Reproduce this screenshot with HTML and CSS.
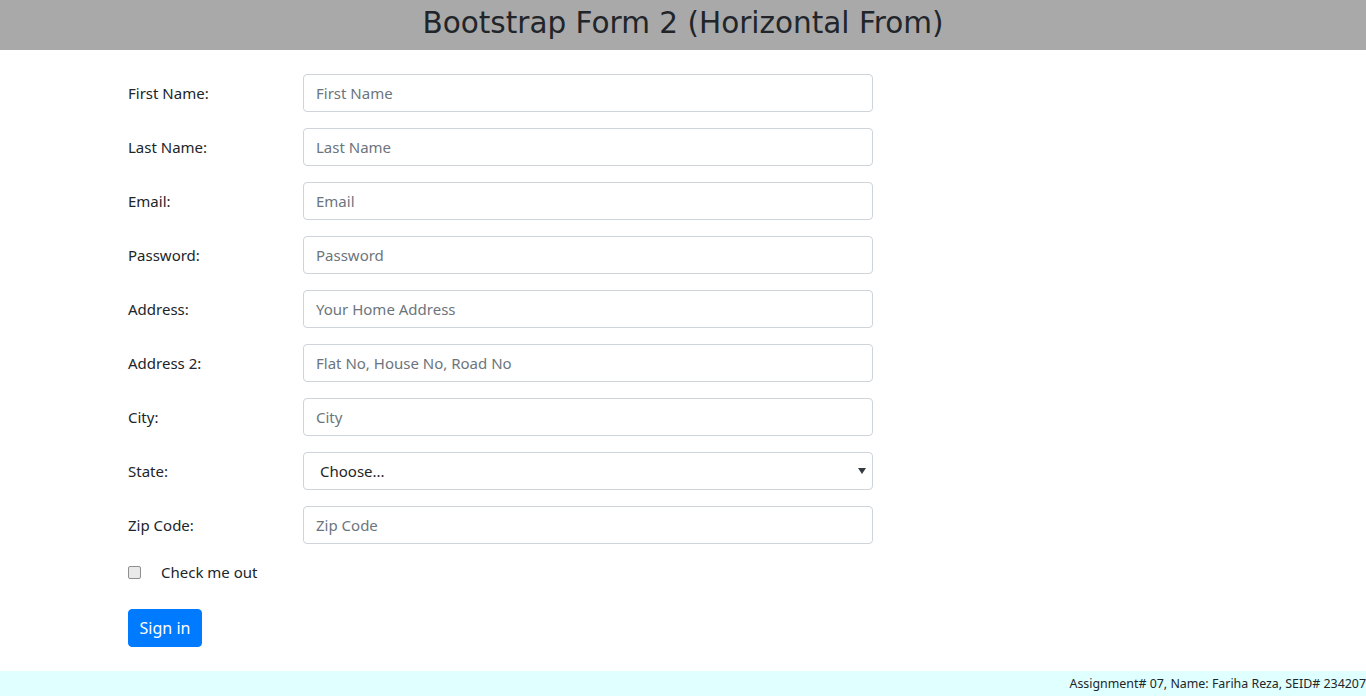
FILE: index.html
```html
<!DOCTYPE html>
<html>
<head>
<meta charset="utf-8">
<link rel="stylesheet" href="styles.css">
</head>
<body>
<header class="top"><h1 class="title">Bootstrap Form 2 (Horizontal From)</h1></header>
<main class="container">
  <form class="form">
    <div class="row"><label class="lbl">First Name:</label><input class="field" placeholder="First Name"></div>
    <div class="row"><label class="lbl">Last Name:</label><input class="field" placeholder="Last Name"></div>
    <div class="row"><label class="lbl">Email:</label><input class="field" placeholder="Email"></div>
    <div class="row"><label class="lbl">Password:</label><input class="field" type="password" placeholder="Password"></div>
    <div class="row"><label class="lbl">Address:</label><input class="field" placeholder="Your Home Address"></div>
    <div class="row"><label class="lbl">Address 2:</label><input class="field" placeholder="Flat No, House No, Road No"></div>
    <div class="row"><label class="lbl">City:</label><input class="field" placeholder="City"></div>
    <div class="row"><label class="lbl">State:</label>
      <div class="selwrap">
        <select class="field sel"><option>Choose...</option></select>
        <svg class="arrow" width="8" height="6" viewBox="0 0 8 6"><path d="M0 0H8L4 6Z" fill="#343a40"/></svg>
      </div>
    </div>
    <div class="row"><label class="lbl">Zip Code:</label><input class="field" placeholder="Zip Code"></div>
    <div class="check"><input type="checkbox" class="cb"><span class="cbl">Check me out</span></div>
    <button type="button" class="btn">Sign in</button>
  </form>
</main>
<footer class="foot">Assignment# 07, Name: Fariha Reza, SEID# 234207</footer>
</body>
</html>
```
FILE: styles.css
```css
* { box-sizing: border-box; }
html, body { margin: 0; padding: 0; }
body {
  font-family: "Noto Sans", "Open Sans", sans-serif;
  font-size: 15px;
  color: #212529;
  background: #fff;
}
.top {
  background: #a9a9a9;
  height: 50px;
  display: flex;
  align-items: center;
  justify-content: center;
  padding-bottom: 2px;
}
.title {
  margin: 0;
  font-family: "DejaVu Sans", Verdana, sans-serif;
  font-weight: normal;
  font-size: 29.5px;
  color: #212529;
  line-height: 1;
}
.container {
  padding: 24px 0 24px 128px;
}
.form { display: flex; flex-direction: column; }
.row {
  display: flex;
  align-items: center;
  height: 38px;
  margin-bottom: 16px;
}
.lbl { width: 175px; flex: none; }
.field {
  width: 570px;
  height: 38px;
  border: 1px solid #ced4da;
  border-radius: 4px;
  padding: 0 12px;
  font-family: inherit;
  font-size: 15px;
  color: #495057;
  background: #fff;
  outline: none;
}
.field::placeholder { color: #6c757d; opacity: 1; }
.selwrap { position: relative; width: 570px; height: 38px; }
.sel { appearance: none; -webkit-appearance: none; padding-left: 16px; color: #212529; }
.arrow { position: absolute; right: 7px; top: 16px; }
.check {
  display: flex;
  align-items: center;
  height: 24px;
}
.cb {
  appearance: none;
  -webkit-appearance: none;
  margin: 0;
  width: 13px;
  height: 13px;
  border: 1px solid #8f8f8f;
  border-radius: 2px;
  background: #e9e9e9;
}
.cbl { margin-left: 20px; }
.btn {
  margin-top: 25px;
  align-self: flex-start;
  width: 74px;
  height: 38px;
  border: 1px solid #007bff;
  background: #007bff;
  color: #fff;
  border-radius: 4px;
  font-family: inherit;
  font-size: 16px;
  padding: 0;
}
.foot {
  background: #e0ffff;
  height: 25px;
  line-height: 25px;
  text-align: right;
  font-size: 12.4px;
}
```
